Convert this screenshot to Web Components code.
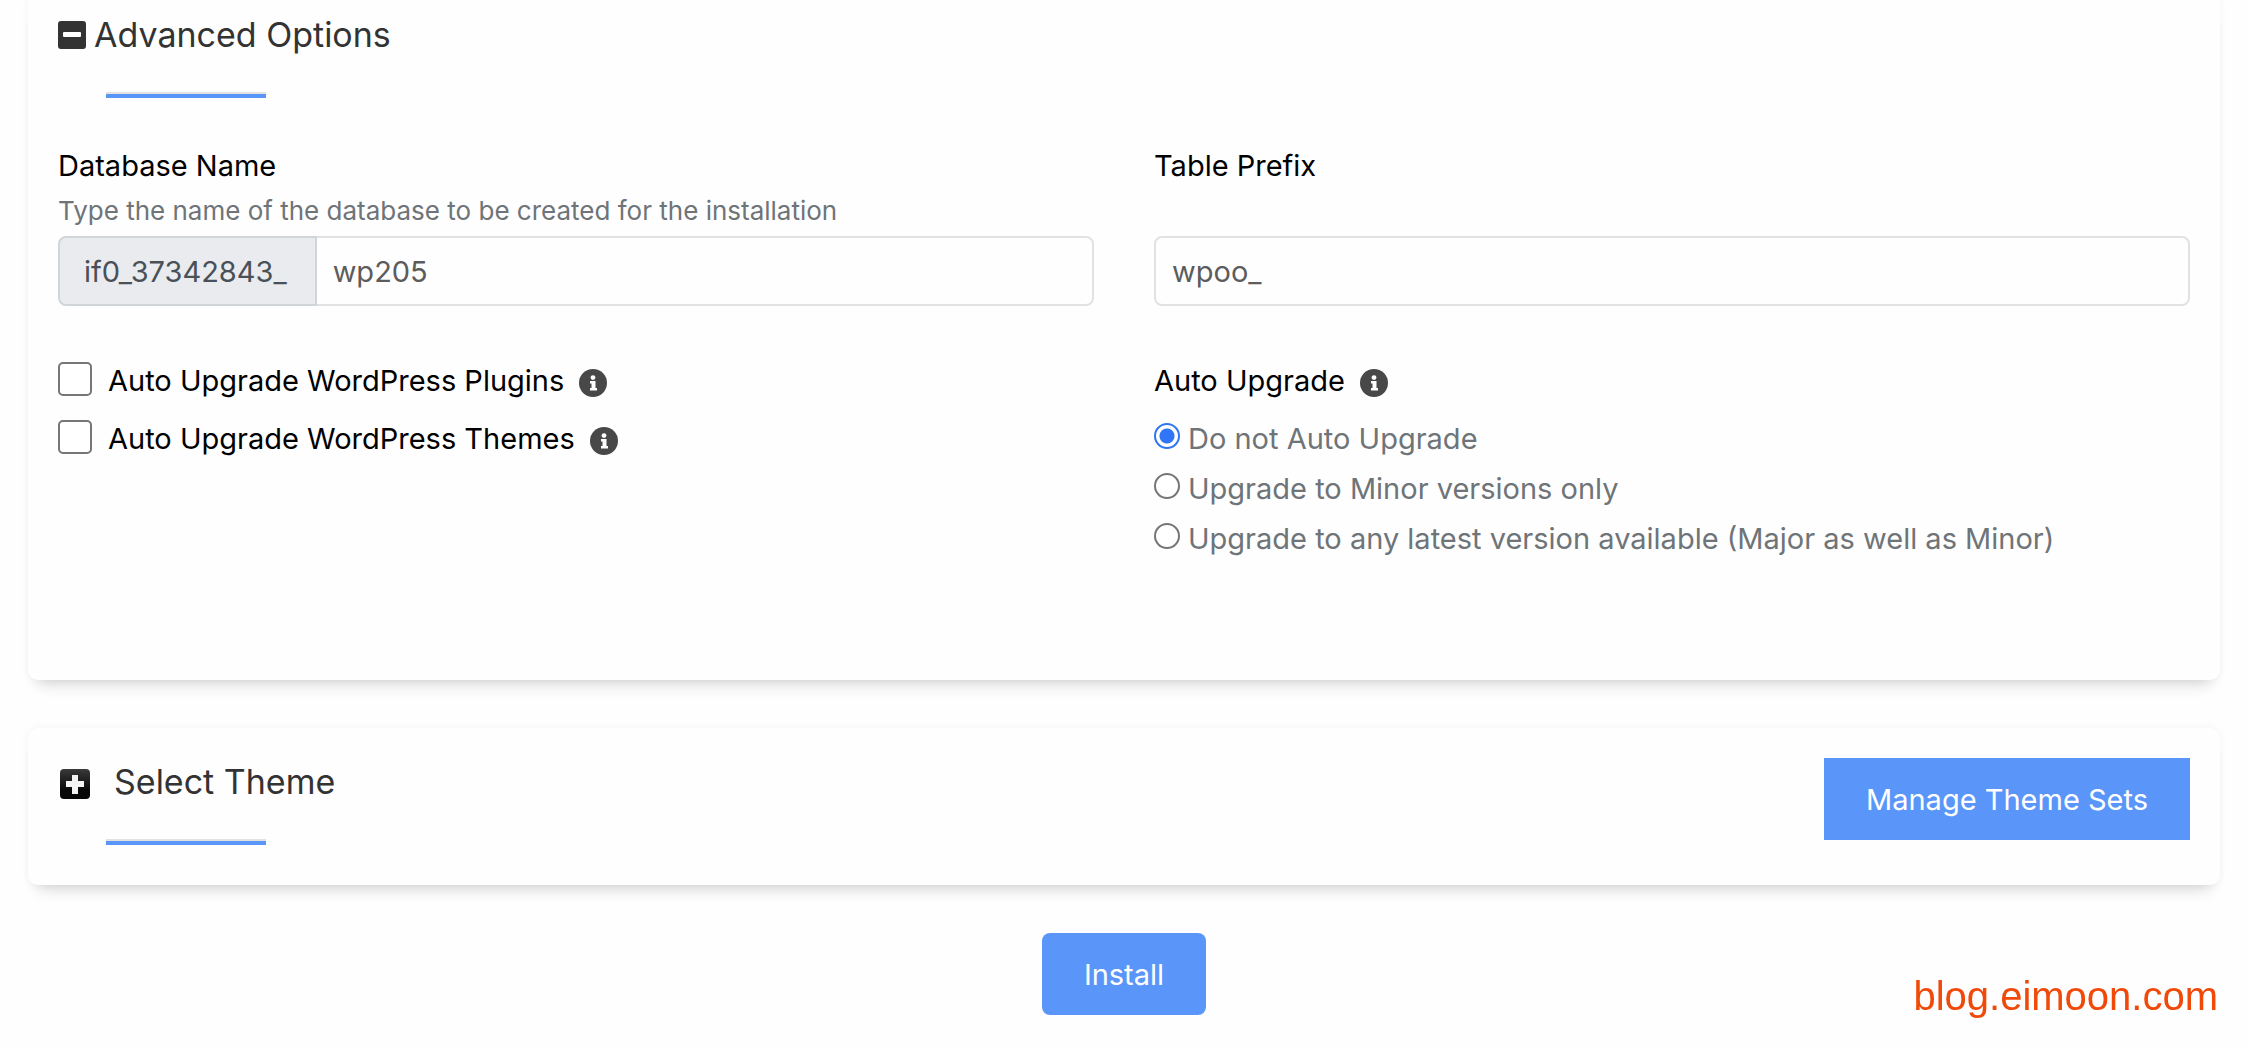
<!DOCTYPE html>
<html lang="en">
<head>
<meta charset="utf-8">
<title>Install WordPress</title>
<style>
	body {
		margin: 0;
		background: #fefefe;
		color: #000;
		font-family: Inter, "Open Sans", sans-serif;
		font-size: 29px;
		--blue: #5a96f9;
		--muted: #6e7478;
		--border: #e2e2e2;
	}
</style>
</head>
<body>
<install-page>
	<option-card class="open">
		<section-title slot="title" icon="minus">Advanced Options</section-title>
		<field-grid>
			<text-field label="Database Name" help="Type the name of the database to be created for the installation" prefix="if0_37342843_" value="wp205"></text-field>
			<text-field label="Table Prefix" value="wpoo_"></text-field>
			<div>
				<check-option label="Auto Upgrade WordPress Plugins"></check-option>
				<check-option label="Auto Upgrade WordPress Themes"></check-option>
			</div>
			<radio-list label="Auto Upgrade" options="Do not Auto Upgrade|Upgrade to Minor versions only|Upgrade to any latest version available (Major as well as Minor)"></radio-list>
		</field-grid>
	</option-card>
	<option-card>
		<section-title slot="title" icon="plus">Select Theme</section-title>
		<action-button slot="action">Manage Theme Sets</action-button>
	</option-card>
	<action-button slot="footer" rounded>Install</action-button>
	<site-mark slot="mark">blog.eimoon.com</site-mark>
</install-page>

<script>
class InstallPage extends HTMLElement {
	constructor() {
		super();
		this.attachShadow({ mode: 'open' });
		this.shadowRoot.innerHTML = `
		<style>
		:host {
			display: block;
			padding: 0 28px 32px;
		}
		main {
			display: flex;
			flex-direction: column;
			gap: 48px;
		}
		footer {
			display: flex;
			justify-content: center;
		}
		</style>
		<main>
			<slot></slot>
			<footer><slot name="footer"></slot></footer>
		</main>
		<slot name="mark"></slot>
		`;
	}
}
customElements.define('install-page', InstallPage);

class OptionCard extends HTMLElement {
	constructor() {
		super();
		this.attachShadow({ mode: 'open' });
		this.shadowRoot.innerHTML = `
		<style>
		:host {
			display: block;
			padding: 30px 30px 40px;
			border-radius: 10px;
			background: #fefefe;
			box-shadow: 0 14px 14px -10px rgba(0, 0, 0, .16), 0 0 8px rgba(0, 0, 0, .05);
		}
		:host(.open) {
			padding: 11px 30px 117px;
			border-radius: 0 0 10px 10px;
		}
		header {
			display: flex;
			justify-content: space-between;
			align-items: flex-start;
		}
		</style>
		<header>
			<slot name="title"></slot>
			<slot name="action"></slot>
		</header>
		<slot></slot>
		`;
	}
}
customElements.define('option-card', OptionCard);

const titleIcons = {
	minus: `<svg width="28" height="28" viewBox="0 0 28 28">
		<rect width="28" height="28" rx="3" fill="#333"/>
		<rect x="5" y="11" width="18" height="5" rx="1" fill="#fff"/>
	</svg>`,
	plus: `<svg width="30" height="30" viewBox="0 0 30 30">
		<defs><linearGradient id="g" x1="0" y1="0" x2="0" y2="1">
			<stop offset="0" stop-color="#3a3a3a"/><stop offset=".7" stop-color="#080808"/>
		</linearGradient></defs>
		<rect width="30" height="30" rx="4" fill="url(#g)"/>
		<path d="M12 6h6v6h6v6h-6v7h-6v-7H6v-6h6z" fill="#f4f4f4"/>
	</svg>`
};

class SectionTitle extends HTMLElement {
	constructor() {
		super();
		this.attachShadow({ mode: 'open' });
	}

	connectedCallback() {
		const icon = this.getAttribute('icon');
		this.shadowRoot.innerHTML = `
		<style>
		:host {
			display: block;
		}
		h2 {
			display: flex;
			align-items: center;
			gap: 8px;
			margin: 0;
			font-size: 34px;
			font-weight: 400;
			line-height: 48px;
			color: #333;
		}
		button {
			display: flex;
			padding: 0;
			border: 0;
			background: none;
		}
		button.plus {
			padding: 4px 16px 0 2px;
		}
		.line {
			width: 160px;
			height: 4px;
			margin: 33px 0 0 48px;
			border-top: 2px solid #e2e2e2;
			background: var(--blue);
		}
		</style>
		<h2><button class="${icon}" aria-label="Toggle section">${titleIcons[icon]}</button><slot></slot></h2>
		<div class="line"></div>
		`;
	}
}
customElements.define('section-title', SectionTitle);

class FieldGrid extends HTMLElement {
	constructor() {
		super();
		this.attachShadow({ mode: 'open' });
		this.shadowRoot.innerHTML = `
		<style>
		:host {
			display: grid;
			grid-template-columns: 1fr 1fr;
			gap: 45px 60px;
			padding-top: 46px;
		}
		</style>
		<slot></slot>
		`;
	}
}
customElements.define('field-grid', FieldGrid);

class TextField extends HTMLElement {
	constructor() {
		super();
		this.attachShadow({ mode: 'open' });
	}

	connectedCallback() {
		const help = this.getAttribute('help');
		const prefix = this.getAttribute('prefix');
		this.shadowRoot.innerHTML = `
		<style>
		:host {
			display: flex;
			flex-direction: column;
		}
		label {
			line-height: 44px;
		}
		small {
			font-size: 26px;
			line-height: 46px;
			color: var(--muted);
		}
		.group {
			display: flex;
			height: 70px;
			margin-top: auto;
		}
		.group:not(:first-child) {
			padding-top: 2px;
		}
		span {
			display: flex;
			align-items: center;
			padding: 0 28px 0 24px;
			border: 2px solid #d2d5d8;
			border-radius: 8px 0 0 8px;
			background: #e9ebef;
			color: #495057;
		}
		input {
			flex: 1;
			min-width: 0;
			box-sizing: border-box;
			padding: 0 16px;
			border: 2px solid var(--border);
			border-radius: 8px;
			background: transparent;
			color: #5c5c5c;
			font: inherit;
			outline: none;
		}
		span + input {
			border-left: 0;
			border-radius: 0 8px 8px 0;
		}
		</style>
		<label for="field">${this.getAttribute('label')}</label>
		${help ? `<small>${help}</small>` : ''}
		<div class="group">
			${prefix ? `<span>${prefix}</span>` : ''}
			<input id="field" type="text" value="${this.getAttribute('value')}">
		</div>
		`;
	}
}
customElements.define('text-field', TextField);

class InfoIcon extends HTMLElement {
	constructor() {
		super();
		this.attachShadow({ mode: 'open' });
		this.shadowRoot.innerHTML = `
		<style>
		:host {
			display: block;
			height: 28px;
			margin: 6px 0 0 15px;
		}
		svg {
			display: block;
		}
		</style>
		<svg width="28" height="28" viewBox="0 0 28 28">
			<circle cx="14" cy="14" r="14" fill="#484848"/>
			<circle cx="14" cy="8.6" r="2.4" fill="#fff"/>
			<path d="M11 12h5.5v7H18v2.500h-7V19h1.500v-4.500H11z" fill="#fff"/>
		</svg>
		`;
	}
}
customElements.define('info-icon', InfoIcon);

class CheckOption extends HTMLElement {
	constructor() {
		super();
		this.attachShadow({ mode: 'open' });
	}

	connectedCallback() {
		this.shadowRoot.innerHTML = `
		<style>
		:host {
			display: flex;
			align-items: center;
			height: 58px;
		}
		input {
			appearance: none;
			box-sizing: border-box;
			width: 34px;
			height: 34px;
			margin: 0 16px 2px 0;
			border: 2px solid #767676;
			border-radius: 5px;
			background: #fff;
		}
		input:checked {
			background: var(--blue);
		}
		</style>
		<input id="check" type="checkbox">
		<label for="check">${this.getAttribute('label')}</label>
		<info-icon></info-icon>
		`;
	}
}
customElements.define('check-option', CheckOption);

// All radios live in one shadow root so that the browser groups them by name
class RadioList extends HTMLElement {
	constructor() {
		super();
		this.attachShadow({ mode: 'open' });
	}

	connectedCallback() {
		const options = this.getAttribute('options').split('|');
		this.shadowRoot.innerHTML = `
		<style>
		:host {
			display: block;
		}
		.title {
			display: flex;
			align-items: center;
			height: 58px;
			margin-bottom: 4px;
		}
		.row {
			display: flex;
			align-items: center;
			height: 50px;
			color: var(--muted);
		}
		input {
			appearance: none;
			box-sizing: border-box;
			width: 26px;
			height: 26px;
			margin: 0 8px 4px 0;
			border: 2px solid #767676;
			border-radius: 50%;
			background: #fff;
		}
		input:checked {
			border-color: #2f75f6;
			background: radial-gradient(circle, #2f75f6 7px, #fff 8px);
		}
		</style>
		<div class="title"><span id="title">${this.getAttribute('label')}</span><info-icon></info-icon></div>
		<div role="radiogroup" aria-labelledby="title">
			${options.map((text, i) => `
			<div class="row">
				<input type="radio" name="upgrade" id="r${i}" ${i === 0 ? 'checked' : ''}>
				<label for="r${i}">${text}</label>
			</div>`).join('')}
		</div>
		`;
	}
}
customElements.define('radio-list', RadioList);

class ActionButton extends HTMLElement {
	constructor() {
		super();
		this.attachShadow({ mode: 'open' });
		this.shadowRoot.innerHTML = `
		<style>
		:host {
			display: block;
		}
		button {
			display: block;
			height: 82px;
			padding: 0 42px;
			border: 0;
			background: var(--blue);
			color: #fff;
			font: inherit;
			cursor: pointer;
		}
		:host([rounded]) button {
			border-radius: 8px;
		}
		</style>
		<button type="button"><slot></slot></button>
		`;
	}
}
customElements.define('action-button', ActionButton);

class SiteMark extends HTMLElement {
	constructor() {
		super();
		this.attachShadow({ mode: 'open' });
		this.shadowRoot.innerHTML = `
		<style>
		:host {
			position: fixed;
			right: 30px;
			bottom: 30px;
			font: 40px/44px "Liberation Sans", Arial, sans-serif;
			color: #f04a0a;
		}
		</style>
		<slot></slot>
		`;
	}
}
customElements.define('site-mark', SiteMark);
</script>
</body>
</html>
